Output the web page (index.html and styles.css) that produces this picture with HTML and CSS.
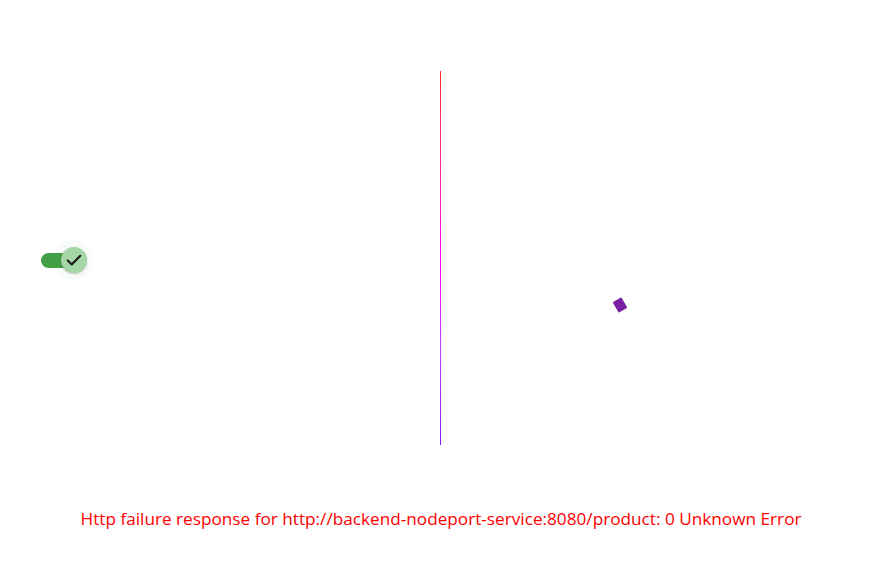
FILE: index.html
```html
<!DOCTYPE html>
<html>
<head>
<meta charset="utf-8">
<link rel="stylesheet" href="styles.css">
</head>
<body>
<main class="page">
  <section class="panels">
    <div class="panel left">
      <div class="toggle">
        <span class="track"></span>
        <span class="halo"></span>
        <span class="thumb">
          <svg width="20" height="20" viewBox="0 0 24 24"><path d="M4.5 12.5l4.8 4.8L19.5 7" fill="none" stroke="#1b1b1b" stroke-width="2.6" stroke-linecap="round" stroke-linejoin="round"/></svg>
        </span>
      </div>
    </div>
    <div class="divider"></div>
    <div class="panel right">
      <span class="diamond"></span>
    </div>
  </section>
  <p class="error">Http failure response for http://backend-nodeport-service:8080/product: 0 Unknown Error</p>
</main>
</body>
</html>
```
FILE: styles.css
```css
html, body { margin: 0; padding: 0; background: #fff; }
.page { width: 884px; height: 581px; display: flex; flex-direction: column; }
.panels { display: flex; margin-top: 71px; height: 374px; }
.panel { flex: 0 0 440px; display: flex; }
.left { align-items: center; padding-left: 41px; box-sizing: border-box; }
.right { flex: 1; position: relative; }
.divider { width: 1px; background: linear-gradient(#ff2a2a 0%, #ff2a95 25%, #ff00ff 50%, #c040ff 75%, #8a1aff 100%); }
.toggle { position: relative; width: 46px; height: 26px; margin-top: 4px; }
.track { position: absolute; left: 0; top: 6px; width: 38px; height: 15px; border-radius: 7.5px; background: #43a047; }
.halo { position: absolute; left: 12px; top: -7px; width: 40px; height: 40px; border-radius: 50%; background: rgba(67,160,71,0.04); }
.thumb { position: absolute; left: 20px; top: 0; width: 26px; height: 26px; border-radius: 50%; background: #a5d6a7; box-shadow: 0 1px 2px rgba(0,0,0,0.25); display: flex; align-items: center; justify-content: center; }
.diamond { position: absolute; left: 174px; top: 228px; width: 10px; height: 12px; background: #7b1fa2; transform: rotate(-30deg); border-radius: 1px; }
.error { margin: 0; margin-top: 63px; text-align: center; color: #ff0000; font-family: "Open Sans", "Noto Sans", sans-serif; font-size: 17.2px; line-height: 22px; padding-right: 2px; }
```
